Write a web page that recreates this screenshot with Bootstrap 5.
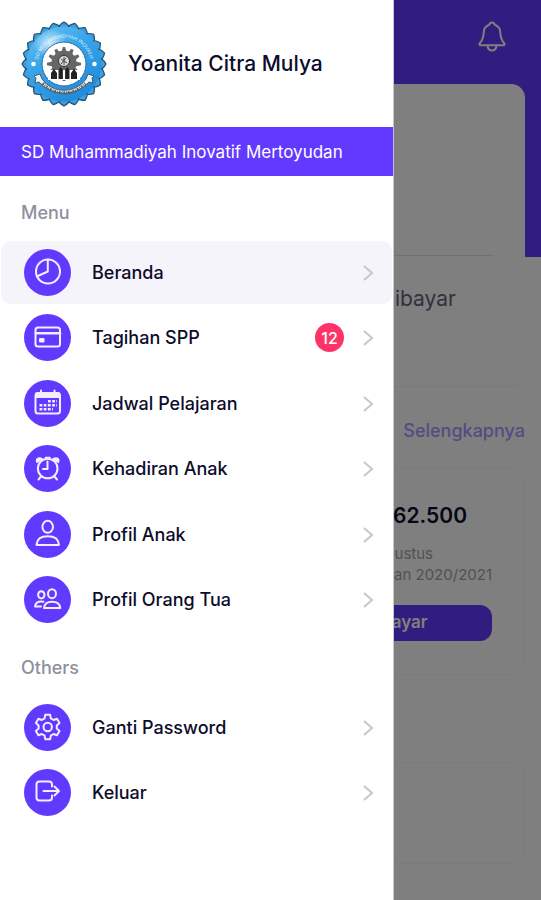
<!DOCTYPE html>
<html lang="id">
<head>
<meta charset="utf-8">
<meta name="viewport" content="width=device-width, initial-scale=1">
<title>Beranda</title>
<link href="https://cdn.jsdelivr.net/npm/bootstrap@5.3.0/dist/css/bootstrap.min.css" rel="stylesheet">
<style>
  body { font-family: "Inter", "Open Sans", sans-serif; color: #0d0c2b; background: #fff; }
  .brand-bg { background: #6239ff; }
  .hero { height: 257px; padding: 20px 32px; }
  .bell-btn { width: 34px; height: 34px; color: #fff; }
  .panel { border: 1px solid #f7f7fa; border-radius: 14px; background: #fff; }
  .page-main { margin-top: -173px; padding: 0 16px; }
  .summary { height: 303px; padding: 0 30px; border-color: #fff #fff #f2f2f6; }
  .summary-top { height: 171px; border-bottom: 1px solid #e4e4ec; }
  .summary-label { font-size: 21px; line-height: 30px; color: #64647c; padding: 28px 38px 0 0; }
  .more-link { font-size: 18px; line-height: 24px; font-weight: 500; color: #a898ff; margin: 32px 0 24px; }
  .bill { height: 208px; padding: 32px; }
  .bill-amount { font-size: 21px; line-height: 32px; font-weight: 600; padding-right: 25px; margin-bottom: 11px; }
  .bill-note { font-size: 15px; line-height: 21px; color: #a2a2ae; }
  .bill-month { padding-right: 59px; }
  .pay-btn { width: 176px; height: 36px; margin-top: 20px; font-size: 17px; font-weight: 600; border-radius: 12px; color: #fff; }
  .empty-panel { height: 102px; margin-top: 87px; }

  .offcanvas.side-menu { width: calc(100vw - 147px); border-right: 1px solid #c6c6ca; color: inherit; }
  .profile { height: 127px; padding: 0 21px; gap: 21px; }
  .profile-name { font-size: 21px; line-height: 30px; font-weight: 500; }
  .school { height: 49px; padding: 2px 21px 0; font-size: 17px; color: #fff; }
  .group-title { font-size: 18px; line-height: 24px; font-weight: 500; color: #8f8fa0; padding: 0 21px; margin: 25px 0 16px; }
  .group-title.second { margin-top: 24px; }
  .menu-list { gap: 2px; padding: 0 1px; }
  .menu-list li:nth-child(even) { margin-bottom: 1px; }
  .menu-link { height: 63px; padding: 0 18px 0 23px; gap: 21px; border-radius: 10px; font-size: 18px; font-weight: 500; color: #0d0c2b; }
  .menu-link.active { background: #f4f4fa; }
  .menu-icon { width: 47px; height: 47px; fill: none; stroke: #f3edff; stroke-width: 2; stroke-linecap: round; stroke-linejoin: round; }
  .menu-icon .disc { fill: #6239ff; stroke: none; }
  .menu-icon .solid { fill: #f3edff; stroke: none; }
  .count { width: 29px; height: 29px; font-size: 16px; font-weight: 500; background: #ff3368; color: #fff; margin-right: -3px; }
  .chevron { width: 12px; height: 18px; fill: none; stroke: #c6c6cc; stroke-width: 2; }
</style>
<script src="https://cdn.jsdelivr.net/npm/bootstrap@5.3.0/dist/js/bootstrap.bundle.min.js"></script>
</head>
<body>

<header class="hero brand-bg d-flex justify-content-end align-items-start">
  <button type="button" class="bell-btn btn p-0 border-0" aria-label="Notifikasi">
    <svg width="34" height="34" viewBox="0 0 34 34" fill="none" stroke="currentColor" stroke-width="2" stroke-linejoin="round"><path d="M17 2.500c-1.500 0-2.400 1-2.700 2.300-3.300 1-5.300 3.800-5.500 7.200-.3 5.500-1 8-4 11.200-.8 1-.4 2.100.8 2.100h22.800c1.200 0 1.600-1.100.8-2.100-3-3.200-3.700-5.700-4-11.200-.2-3.400-2.200-6.200-5.500-7.200-.3-1.300-1.200-2.300-2.700-2.300z"/><path d="M12.500 26c.5 3 2.200 4.500 4.500 4.500s4-1.500 4.500-4.500"/></svg>
  </button>
</header>

<main class="page-main d-flex flex-column">
  <section class="panel summary text-end">
    <div class="summary-top"></div>
    <div class="summary-label">Sudah Dibayar</div>
  </section>
  <a href="#" class="more-link align-self-end text-decoration-none">Selengkapnya</a>
  <section class="panel bill text-end">
    <div class="bill-amount">Rp 162.500</div>
    <div class="bill-note bill-month">Bulan Agustus</div>
    <div class="bill-note">Tahun Ajaran 2020/2021</div>
    <button type="button" class="pay-btn btn brand-bg border-0 p-0">Bayar</button>
  </section>
  <section class="panel empty-panel"></section>
</main>

<div class="offcanvas-backdrop show"></div>

<aside class="offcanvas offcanvas-start show side-menu" data-bs-backdrop="false" data-bs-scroll="true" tabindex="-1" aria-label="Menu utama">
  <div class="profile d-flex align-items-center flex-shrink-0">
    <svg width="86" height="86" viewBox="-43 -43 86 86" role="img" aria-label="Logo sekolah">
      <defs>
        <linearGradient id="ring" x1="0" y1="0" x2="0.6" y2="1"><stop offset="0" stop-color="#6cc4f4"/><stop offset=".45" stop-color="#3aa5ea"/><stop offset="1" stop-color="#218bdc"/></linearGradient>
        <radialGradient id="gloss"><stop offset="0" stop-color="#fff" stop-opacity=".75"/><stop offset="1" stop-color="#fff" stop-opacity="0"/></radialGradient>
        <path id="petal" d="M-5.400-37Q-4.500-39.500 0-42Q4.500-39.500 5.400-37L0-33Z"/>
        <g id="petals"><use href="#petal"/><use href="#petal" transform="rotate(15)"/><use href="#petal" transform="rotate(30)"/><use href="#petal" transform="rotate(45)"/><use href="#petal" transform="rotate(60)"/><use href="#petal" transform="rotate(75)"/></g>
        <path id="tooth" d="M-2.600-11L-1.200-17H1.200L2.600-11Z"/>
        <g id="teeth"><use href="#tooth"/><use href="#tooth" transform="rotate(30)"/><use href="#tooth" transform="rotate(60)"/></g>
        <path id="arcTop" d="M-25.500 6A26.200 26.200 0 1 1 25.500 6"/>
      </defs>
      <g fill="#3b9fe0" stroke="#23506f" stroke-width="1.200"><use href="#petals"/><use href="#petals" transform="rotate(90)"/><use href="#petals" transform="rotate(180)"/><use href="#petals" transform="rotate(270)"/></g>
      <circle r="37.500" fill="url(#ring)"/>
      <ellipse cx="-14" cy="-21" rx="17" ry="13" fill="url(#gloss)" transform="rotate(-20 -14 -21)"/>
      <text font-family="Liberation Sans, sans-serif" font-size="5" fill="#d9f1ff"><textPath href="#arcTop" startOffset="50%" text-anchor="middle">SD MUHAMMADIYAH INOVATIF</textPath></text>
      <circle r="22" fill="#fff" stroke="#2a6f9f"/>
      <g fill="#666"><use href="#teeth"/><use href="#teeth" transform="rotate(90)"/><use href="#teeth" transform="rotate(180)"/><use href="#teeth" transform="rotate(270)"/><circle cy="-1" r="12.500"/></g>
      <path d="M-16 6H16V16H-16Z" fill="#fff"/>
      <circle cy="-3" r="5.500" fill="#ddd" stroke="#333"/>
      <path d="M-3-5L3-1M-3 0L2-6M0-7V1" stroke="#444" fill="none"/>
      <path d="M-13 15V9l3-4 3 4v6zM-5.500 15V6l2.200-3 2.200 3v9zM1.100 15V6l2.200-3 2.200 3v9zM7 15V9l3-4 3 4v6z" fill="#222"/>
      <circle cx="-30.500" cy="0" r="2.300" fill="#fff"/><circle cx="30.500" cy="0" r="2.300" fill="#fff"/>
      <path d="M-30 12l6-2 2 5A27 27 0 0 0 22 15l2-5 6 2-2 2 1 5-4-1A33.500 33.500 0 0 1-25 18l-4 1 1-5z" fill="#f2f2ee" stroke="#345" stroke-width=".8"/>
      <path d="M-21.500 19.500A29 29 0 0 0 21.500 19.500" fill="none" stroke="#566" stroke-width="3.500" stroke-dasharray="1.800 1.100 .8 1"/>
    </svg>
    <div class="profile-name">Yoanita Citra Mulya</div>
  </div>
  <div class="school brand-bg d-flex align-items-center flex-shrink-0 text-nowrap">SD Muhammadiyah Inovatif Mertoyudan</div>

  <nav aria-label="Menu">
    <h2 class="group-title">Menu</h2>
    <ul class="menu-list list-unstyled d-flex flex-column mb-0">
      <li><a href="#" class="menu-link active d-flex align-items-center text-decoration-none" aria-current="page">
        <svg class="menu-icon" viewBox="0 0 47 47"><circle class="disc" cx="23.500" cy="23.500" r="23.500"/><circle cx="24" cy="22.500" r="12"/><path d="M23.800 10.500V22.500L12.800 27.500"/></svg>
        <span class="flex-grow-1">Beranda</span>
        <svg class="chevron" viewBox="0 0 12 18"><path d="M2 2l8 7-8 7"/></svg></a></li>
      <li><a href="#" class="menu-link d-flex align-items-center text-decoration-none">
        <svg class="menu-icon" viewBox="0 0 47 47"><circle class="disc" cx="23.500" cy="23.500" r="23.500"/><rect x="11.500" y="13.500" width="24.500" height="19" rx="2.500"/><path d="M12 19.300H36" stroke-width="2.500"/><rect class="solid" x="15" y="24" width="5.500" height="4.500" rx="1"/></svg>
        <span class="flex-grow-1">Tagihan SPP</span>
        <span class="count rounded-circle d-flex align-items-center justify-content-center">12</span>
        <svg class="chevron" viewBox="0 0 12 18"><path d="M2 2l8 7-8 7"/></svg></a></li>
      <li><a href="#" class="menu-link d-flex align-items-center text-decoration-none">
        <svg class="menu-icon" viewBox="0 0 47 47"><circle class="disc" cx="23.500" cy="23.500" r="23.500"/><rect x="11.500" y="13" width="24.500" height="20.500" rx="2.500"/><path class="solid" d="M11.500 12.500H36V18H11.500Z"/><path d="M17 10.500V13M30.500 10.500V13"/><path d="M24 21.200H33M15.500 25.200H33M15.500 29.200H29" stroke-width="2.600" stroke-linecap="butt" stroke-dasharray="2.800 1.400"/></svg>
        <span class="flex-grow-1">Jadwal Pelajaran</span>
        <svg class="chevron" viewBox="0 0 12 18"><path d="M2 2l8 7-8 7"/></svg></a></li>
      <li><a href="#" class="menu-link d-flex align-items-center text-decoration-none">
        <svg class="menu-icon" viewBox="0 0 47 47"><circle class="disc" cx="23.500" cy="23.500" r="23.500"/><circle cx="23.700" cy="23.500" r="9.800"/><path d="M23.500 16.500V24H19M17 31.500L14.500 34.500M30.500 31.500L33 34.500"/><path class="solid" d="M12.800 18.200c-2-2.500-.8-6 2.700-6 1.900 0 3.200.8 3.900 2zM34.600 18.200c2-2.500.8-6-2.700-6-1.900 0-3.200.8-3.900 2z"/><path d="M21.500 12.500H26" stroke-width="1.500"/></svg>
        <span class="flex-grow-1">Kehadiran Anak</span>
        <svg class="chevron" viewBox="0 0 12 18"><path d="M2 2l8 7-8 7"/></svg></a></li>
      <li><a href="#" class="menu-link d-flex align-items-center text-decoration-none">
        <svg class="menu-icon" viewBox="0 0 47 47"><circle class="disc" cx="23.500" cy="23.500" r="23.500"/><ellipse cx="23.700" cy="15.800" rx="5.300" ry="6"/><path d="M12.500 33.500C13 28 17 25.200 23.700 25.200S34.500 28 35 33.500Q35 34 34.500 34H13Q12.500 34 12.500 33.500Z"/></svg>
        <span class="flex-grow-1">Profil Anak</span>
        <svg class="chevron" viewBox="0 0 12 18"><path d="M2 2l8 7-8 7"/></svg></a></li>
      <li><a href="#" class="menu-link d-flex align-items-center text-decoration-none">
        <svg class="menu-icon" viewBox="0 0 47 47"><circle class="disc" cx="23.500" cy="23.500" r="23.500"/><ellipse cx="28" cy="17.700" rx="4" ry="4.500"/><path d="M20 32C20.500 27.800 23 25.700 28 25.700S35.800 27.800 36.300 32Z"/><ellipse cx="17.300" cy="18.800" rx="3.200" ry="3.600"/><path d="M19.500 25.700C14.500 25 11.500 27 11 30.500H17"/></svg>
        <span class="flex-grow-1">Profil Orang Tua</span>
        <svg class="chevron" viewBox="0 0 12 18"><path d="M2 2l8 7-8 7"/></svg></a></li>
    </ul>

    <h2 class="group-title second">Others</h2>
    <ul class="menu-list list-unstyled d-flex flex-column mb-0">
      <li><a href="#" class="menu-link d-flex align-items-center text-decoration-none">
        <svg class="menu-icon" viewBox="0 0 47 47"><circle class="disc" cx="23.500" cy="23.500" r="23.500"/><g transform="translate(23.700 23)"><path d="M-3.100-8.600L-2.500-12.200H2.500L3.100-8.600L5.900-7L9.300-8.300L11.800-4L9.100-1.600V1.600L11.800 4L9.300 8.300L5.900 7L3.100 8.600L2.500 12.200H-2.500L-3.100 8.600L-5.900 7L-9.300 8.300L-11.800 4L-9.100 1.600V-1.600L-11.800-4L-9.300-8.300L-5.900-7Z"/><circle r="4.200"/></g></svg>
        <span class="flex-grow-1">Ganti Password</span>
        <svg class="chevron" viewBox="0 0 12 18"><path d="M2 2l8 7-8 7"/></svg></a></li>
      <li><a href="#" class="menu-link d-flex align-items-center text-decoration-none">
        <svg class="menu-icon" viewBox="0 0 47 47"><circle class="disc" cx="23.500" cy="23.500" r="23.500"/><path d="M28 17.500V15.500Q28 12.500 25 12.500H15.500Q12.500 12.500 12.500 15.500V28.500Q12.500 31.500 15.500 31.500H25Q28 31.500 28 28.500V26.500M19.500 22H35M30.500 17.500L35 22L30.500 26.500"/></svg>
        <span class="flex-grow-1">Keluar</span>
        <svg class="chevron" viewBox="0 0 12 18"><path d="M2 2l8 7-8 7"/></svg></a></li>
    </ul>
  </nav>
</aside>

</body>
</html>
